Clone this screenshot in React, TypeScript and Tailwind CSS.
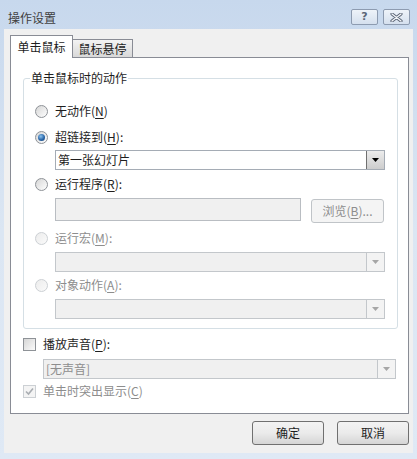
import React from "react";

function Radio({ checked = false, disabled = false }: { checked?: boolean; disabled?: boolean }) {
  return (
    <span
      className={`flex w-[13px] h-[13px] shrink-0 items-center justify-center rounded-full border ${
        disabled
          ? "border-[#ccd0d4] bg-gradient-to-br from-[#ececec] to-[#fafafa]"
          : "border-[#8e9297] bg-gradient-to-br from-[#d6d6d6] to-[#ffffff]"
      }`}
    >
      {checked && (
        <span className="w-[7px] h-[7px] rounded-full bg-[radial-gradient(circle_at_40%_35%,#8cc3ee,#2a66a8_55%,#153e6e)]" />
      )}
    </span>
  );
}

function Check({ checked = false, disabled = false }: { checked?: boolean; disabled?: boolean }) {
  return (
    <span
      className={`flex w-[13px] h-[13px] shrink-0 items-center justify-center border ${
        disabled
          ? "border-[#ccd0d4] bg-[#f4f4f4]"
          : "border-[#8e9297] bg-gradient-to-br from-[#d6d6d6] to-[#fbfbfb]"
      }`}
    >
      {checked && (
        <svg width="9" height="9" viewBox="0 0 9 9">
          <path d="M1 4.5 L3.5 7 L8 1.5" fill="none" stroke={disabled ? "#a9adb2" : "#1b3d6b"} strokeWidth="1.6" />
        </svg>
      )}
    </span>
  );
}

function Combo({ text, disabled = false, className = "" }: { text?: string; disabled?: boolean; className?: string }) {
  return (
    <div
      className={`flex h-[20px] items-stretch border ${
        disabled ? "border-[#c3c7cb] bg-[#f0f0f0]" : "border-[#a5acb5] bg-white"
      } ${className}`}
    >
      <span className={`flex-1 pl-[2px] leading-[18px] ${disabled ? "text-[#8d8d8d]" : "text-[#1e1e1e]"}`}>{text}</span>
      <span
        className={`w-[18px] flex items-center justify-center border-l ${
          disabled
            ? "border-[#c3c7cb] bg-[#f3f3f3]"
            : "border-[#707070] bg-gradient-to-b from-[#ececec] to-[#cdcdcd]"
        }`}
      >
        <svg width="7" height="4" viewBox="0 0 7 4">
          <path d="M0 0h7L3.5 4z" fill={disabled ? "#a6a6a6" : "#000"} />
        </svg>
      </span>
    </div>
  );
}

function Key({ k }: { k: string }) {
  return (
    <>
      (<span className="underline underline-offset-[2px] decoration-[1px]">{k}</span>)
    </>
  );
}

export default function App() {
  return (
    <div className="w-[417px] h-[459px] flex flex-col bg-gradient-to-b from-[#c7d8ed] via-[#dbe6f3] to-[#dfe9f5] font-['Noto_Sans_CJK_SC',sans-serif] text-[12px] text-[#1e1e1e]">
      {/* title bar */}
      <div className="h-[29px] flex items-start">
        <span className="ml-[8px] mt-[10px] leading-[16px] text-[#404040]">操作设置</span>
        <div className="ml-auto mr-[7px] mt-[9px] flex gap-[5px]">
          <div className="w-[27px] h-[16px] rounded-[2px] border border-[#8d9bb0] bg-gradient-to-b from-[#eef3f9] to-[#d5e0ee] flex items-center justify-center">
            <span className="font-['DejaVu_Sans',sans-serif] font-bold text-[11px] leading-[12px] text-[#5b6677]">?</span>
          </div>
          <div className="w-[27px] h-[16px] rounded-[2px] border border-[#8d9bb0] bg-gradient-to-b from-[#eef3f9] to-[#d5e0ee] flex items-center justify-center">
            <svg width="13" height="9" viewBox="0 0 13 9">
              <path d="M2 1 L11 8 M11 1 L2 8" stroke="#5b6677" strokeWidth="3.2" strokeLinecap="round" />
              <path d="M2 1 L11 8 M11 1 L2 8" stroke="#f4f6f9" strokeWidth="1.3" strokeLinecap="round" />
            </svg>
          </div>
        </div>
      </div>

      {/* client area */}
      <div className="mx-[4px] h-[424px] bg-[#f0f0f0] pl-[6px] pt-[6px] flex flex-col">
        {/* tabs */}
        <div className="flex items-end h-[22px] relative z-10">
          <div className="w-[63px] h-[23px] -mb-[1px] bg-white border border-b-0 border-[#898c95] flex items-center justify-center leading-[16px]">
            单击鼠标
          </div>
          <div className="w-[60px] h-[18px] bg-gradient-to-b from-[#f3f3f3] to-[#d9d9d9] border border-l-0 border-b-0 border-[#898c95] flex items-center justify-center leading-[16px]">
            鼠标悬停
          </div>
        </div>

        {/* tab panel */}
        <div className="w-[399px] h-[357px] border border-[#898c95] bg-white flex flex-col">
          <div className="relative ml-[12px] mt-[20px] w-[375px] h-[251px] rounded-[3px] border border-[#d5dfe5] pl-[11px] pt-[24px] flex flex-col">
            <span className="absolute left-[6px] top-[-9px] px-[1px] bg-white leading-[16px]">单击鼠标时的动作</span>

            <div className="h-[16px] flex items-center gap-[7px]">
              <Radio />
              <span className="leading-[16px]">无动作<Key k="N" /></span>
            </div>

            <div className="mt-[10px] h-[16px] flex items-center gap-[7px]">
              <Radio checked />
              <span className="leading-[16px]">超链接到<Key k="H" />:</span>
            </div>
            <Combo text="第一张幻灯片" className="mt-[5px] ml-[20px] w-[330px]" />

            <div className="mt-[6px] h-[16px] flex items-center gap-[7px]">
              <Radio />
              <span className="leading-[16px]">运行程序<Key k="R" />:</span>
            </div>
            <div className="mt-[6px] ml-[20px] h-[24px] flex items-start">
              <div className="w-[246px] h-[23px] border border-[#b9bdc2] bg-[#f0f0f0]" />
              <div className="ml-[10px] mt-[1px] w-[73px] h-[24px] rounded-[3px] border border-[#c0c4c8] bg-[#f4f4f4] flex items-center justify-center leading-[16px] text-[#8d8d8d]">
                浏览<Key k="B" />...
              </div>
            </div>

            <div className="mt-[8px] h-[16px] flex items-center gap-[7px]">
              <Radio disabled />
              <span className="leading-[16px] text-[#8d8d8d]">运行宏<Key k="M" />:</span>
            </div>
            <Combo disabled className="mt-[6px] ml-[20px] w-[330px]" />

            <div className="mt-[5px] h-[16px] flex items-center gap-[7px]">
              <Radio disabled />
              <span className="leading-[16px] text-[#8d8d8d]">对象动作<Key k="A" />:</span>
            </div>
            <Combo disabled className="mt-[6px] ml-[20px] w-[330px]" />
          </div>

          <div className="mt-[7px] ml-[12px] h-[16px] flex items-center gap-[7px]">
            <Check />
            <span className="leading-[16px]">播放声音<Key k="P" />:</span>
          </div>
          <Combo disabled text="[无声音]" className="mt-[7px] ml-[32px] w-[353px]" />
          <div className="mt-[4px] ml-[12px] h-[16px] flex items-center gap-[7px]">
            <Check checked disabled />
            <span className="leading-[16px] text-[#8d8d8d]">单击时突出显示<Key k="C" /></span>
          </div>
        </div>

        {/* dialog buttons */}
        <div className="mt-[7px] pr-[4px] flex justify-end gap-[13px]">
          <button className="w-[72px] h-[24px] rounded-[3px] border border-[#707070] bg-gradient-to-b from-[#f3f3f3] via-[#ebebeb] to-[#d5d5d5] leading-[16px]">
            确定
          </button>
          <button className="w-[72px] h-[24px] rounded-[3px] border border-[#707070] bg-gradient-to-b from-[#f3f3f3] via-[#ebebeb] to-[#d5d5d5] leading-[16px]">
            取消
          </button>
        </div>
      </div>
    </div>
  );
}
